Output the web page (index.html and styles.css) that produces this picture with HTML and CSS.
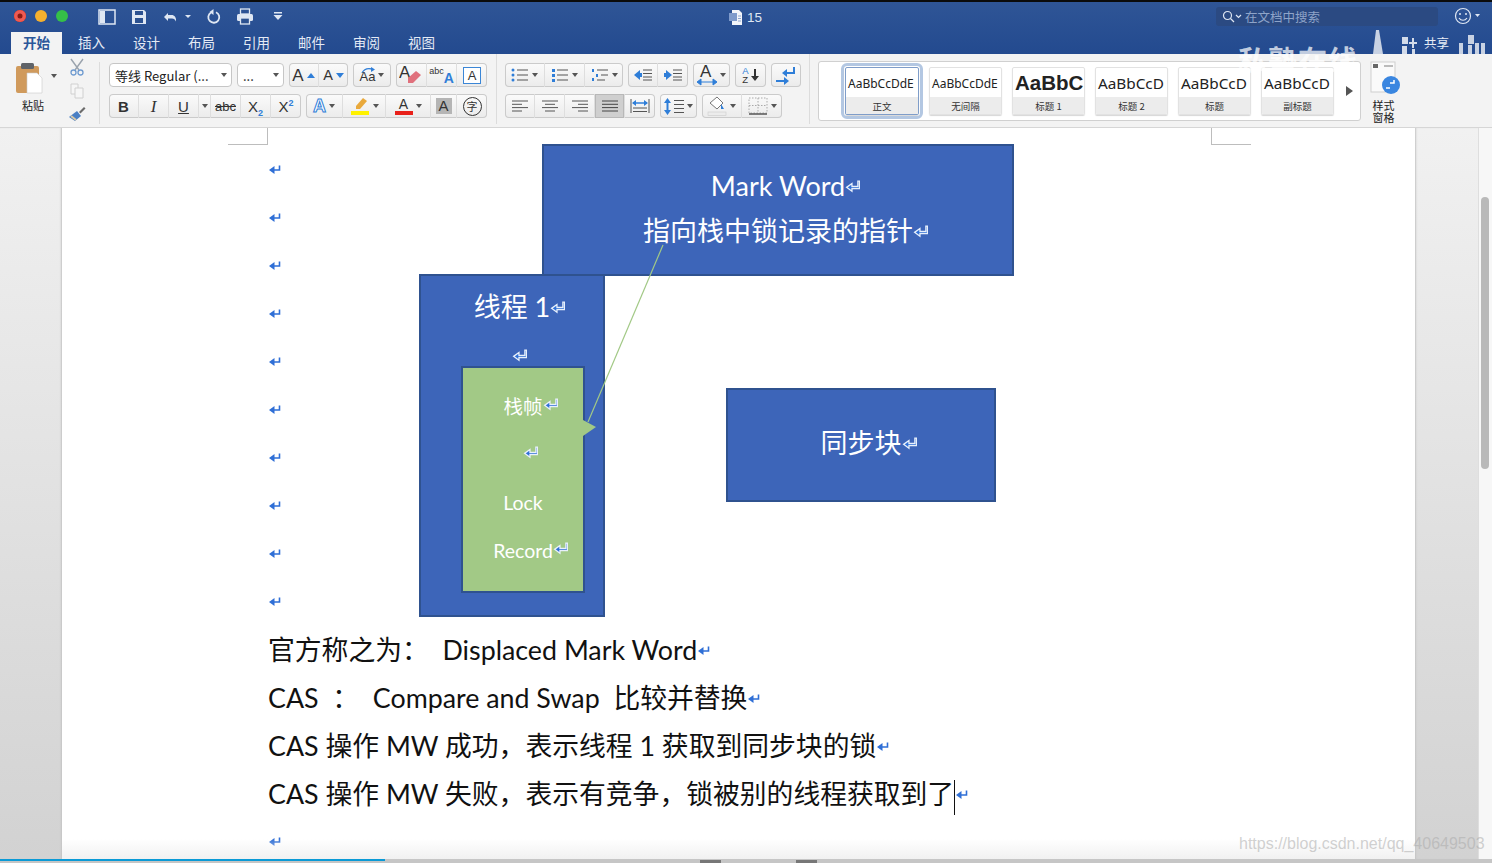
FILE: index.html
```html
<!DOCTYPE html>
<html>
    <head>
        <meta charset="utf-8">
        <title>15</title>
        <link rel="stylesheet" href="styles.css">
    </head>
    <body>
        <svg class="defs" width="0" height="0">
            <symbol id="enter" viewBox="0 0 12 10">
                <path d="M10.5 0.5v4.500H5" fill="none" stroke="currentColor" stroke-width="1.600"/>
                <path d="M0 5 L5.500 1 V9 Z" fill="currentColor"/>
            </symbol>
            <symbol id="enterLight" viewBox="0 0 14 12">
                <path d="M12 1v5H6.500V3.200L1.500 6.800l5 3.600V8H13.500V1z" fill="#2f6fd6" stroke="#e8f0fb" stroke-width="1.200"/>
            </symbol>
        </svg>

        <div id="app">
            <div class="topbar">
                <div class="titlerow">
                    <div class="lights">
                        <span class="light red"></span>
                        <span class="light yellow"></span>
                        <span class="light green"></span>
                    </div>
                    <div class="quick">
                        <svg class="q q1" width="18" height="16" viewBox="0 0 18 16"><rect x="1" y="1" width="16" height="14" fill="none" stroke="#dfe7f3" stroke-width="1.500"/><rect x="2" y="2" width="5" height="12" fill="#dfe7f3"/></svg>
                        <svg class="q q2" width="16" height="16" viewBox="0 0 16 16"><path d="M1 1h12l2 2v12H1z" fill="#dfe7f3"/><rect x="4" y="2" width="8" height="4" fill="#2c5190"/><rect x="4" y="9" width="8" height="5" fill="#2c5190"/></svg>
                        <svg class="q q3" width="28" height="14" viewBox="0 0 28 14"><path d="M5 3 1 7l4 4V8.500h4c2 0 3 1 4 3 .5-4-1.500-6.500-4.500-6.500H5z" fill="#dfe7f3"/><path d="M22 5h6l-3 3z" fill="#dfe7f3"/></svg>
                        <svg class="q q4" width="16" height="16" viewBox="0 0 16 16"><path d="M10 3.200a5.500 5.500 0 1 1-5 .3" fill="none" stroke="#dfe7f3" stroke-width="1.800"/><path d="M7.500 0v6l-4-3z" fill="#dfe7f3"/></svg>
                        <svg class="q q5" width="18" height="17" viewBox="0 0 18 17"><rect x="4.500" y="1" width="9" height="5" fill="none" stroke="#dfe7f3" stroke-width="1.300"/><rect x="1" y="6" width="16" height="7" rx="1.500" fill="#dfe7f3"/><rect x="4.500" y="10" width="9" height="6" fill="#2c5190" stroke="#dfe7f3" stroke-width="1.300"/></svg>
                        <svg class="q q6" width="10" height="9" viewBox="0 0 10 9"><rect x="1" y="0" width="8" height="1.500" fill="#dfe7f3"/><path d="M0.500 3h9L5 8z" fill="#dfe7f3"/></svg>
                    </div>
                    <div class="doctitle">
                        <svg width="13" height="15" viewBox="0 0 13 15"><path d="M3 0h7l3 3v12H3z" fill="#f2f5fa"/><rect x="0" y="3" width="8" height="8" fill="#7f9bcb"/><path d="M9 6h3M9 8.500h3M9 11h3" stroke="#8fa6cf"/></svg>
                        <span>15</span>
                    </div>
                    <div class="searchbox">
                        <svg width="20" height="13" viewBox="0 0 20 13"><circle cx="5.500" cy="5.500" r="4" fill="none" stroke="#dfe7f3" stroke-width="1.200"/><path d="M8.500 8.500 12 12" stroke="#dfe7f3" stroke-width="1.200"/><path d="M14 5l2.500 2.500L19 5" fill="none" stroke="#dfe7f3" stroke-width="1.200"/></svg>
                        <span>在文档中搜索</span>
                    </div>
                    <svg class="smile" width="27" height="18" viewBox="0 0 27 18"><circle cx="9" cy="9" r="7.500" fill="none" stroke="#dfe7f3" stroke-width="1.200"/><circle cx="6" cy="7" r="1" fill="#dfe7f3"/><circle cx="12" cy="7" r="1" fill="#dfe7f3"/><path d="M5 11c2 3 6 3 8 0" fill="none" stroke="#dfe7f3" stroke-width="1.200"/><path d="M21 7h5l-2.500 3z" fill="#dfe7f3"/></svg>
                </div>
                <div class="tabs">
                    <div class="tab active">开始</div>
                    <div class="tab">插入</div>
                    <div class="tab">设计</div>
                    <div class="tab">布局</div>
                    <div class="tab">引用</div>
                    <div class="tab">邮件</div>
                    <div class="tab">审阅</div>
                    <div class="tab">视图</div>
                </div>
            </div>

            <div class="ribbon">
                <div class="clipSec">
                    <div class="pasteBtn">
                        <svg width="44" height="32" viewBox="0 0 44 32"><rect x="1" y="4" width="23" height="27" rx="2" fill="#d09a5c"/><rect x="6" y="1" width="13" height="6" rx="1.500" fill="#5f6368"/><path d="M12 11h10l5 5v15H12z" fill="#fff" stroke="#c9c9c9" stroke-width=".6"/><path d="M36 12h6l-3 4z" fill="#555"/></svg>
                        <span>粘贴</span>
                    </div>
                    <div class="clipTools">
                        <svg width="16" height="18" viewBox="0 0 16 18"><path d="M2 1l8 11M14 1 6 12" stroke="#9aa3ad" stroke-width="1.400"/><circle cx="4.500" cy="14.500" r="2.500" fill="none" stroke="#6f9bd0" stroke-width="1.300"/><circle cx="11.500" cy="14.500" r="2.500" fill="none" stroke="#6f9bd0" stroke-width="1.300"/></svg>
                        <svg width="14" height="16" viewBox="0 0 14 16"><path d="M1 1h7v10H1z" fill="#f6f6f6" stroke="#d0d0d0"/><path d="M5 5h8v10H5z" fill="#f6f6f6" stroke="#d0d0d0"/></svg>
                        <svg width="18" height="16" viewBox="0 0 18 16"><path d="M1 11 9 5l4 5-6 5z" fill="#4a7fc4"/><path d="M3 10l5 4" stroke="#d8c9a8" stroke-width="2"/><path d="M11 6l5-5 1.500 1.500-5 5z" fill="#6b6b6b"/></svg>
                    </div>
                </div>

                <div class="fontSec">
                    <div class="row">
                        <div class="select wFont">
                            <span class="selectText">等线 Regular (...</span>
                            <span class="selectArrow"></span>
                        </div>
                        <div class="select wSize">
                            <span class="selectText">...</span>
                            <span class="selectArrow"></span>
                        </div>
                        <div class="group">
                            <div class="tb w30"><span class="ltr big">A</span><svg width="8" height="5" viewBox="0 0 8 5"><path d="M0 5h8L4 0z" fill="#2f7ed8"/></svg></div>
                            <div class="tb w29"><span class="ltr mid">A</span><svg width="8" height="5" viewBox="0 0 8 5"><path d="M0 0h8L4 5z" fill="#2f7ed8"/></svg></div>
                        </div>
                        <div class="group">
                            <div class="tb w38">
                                <span class="caseIcon">
                                    <svg class="swoop" width="14" height="6" viewBox="0 0 14 6"><path d="M1 6C3 2 7 1 11 2" fill="none" stroke="#2f7ed8" stroke-width="1.300"/><path d="M10 0l4 2.500L10 5z" fill="#2f7ed8"/></svg>
                                    <span class="ltr case">Aa</span>
                                </span>
                                <svg class="caret" width="6" height="4" viewBox="0 0 6 4"><path d="M0 0h6L3 4z"/></svg>
                            </div>
                        </div>
                        <div class="group">
                            <div class="tb w31">
                                <svg width="24" height="20" viewBox="0 0 24 20"><text x="0" y="13" class="svgText">A</text><path d="M9 13l8-7 5 4-8 8H9z" fill="#e0707c"/></svg>
                            </div>
                            <div class="tb w30 abcA"><span class="abcSmall">abc</span><span class="abcBig">A</span></div>
                            <div class="tb w30"><span class="boxedA">A</span></div>
                        </div>
                    </div>
                    <div class="row">
                        <div class="group">
                            <div class="tb w30"><b class="ltr sym">B</b></div>
                            <div class="tb w30"><i class="ltr serif">I</i></div>
                            <div class="tb w30"><u class="ltr sym">U</u></div>
                            <div class="tb w12"><svg class="caret" width="6" height="4" viewBox="0 0 6 4"><path d="M0 0h6L3 4z"/></svg></div>
                            <div class="tb w30"><s class="ltr abc">abc</s></div>
                            <div class="tb w30"><span class="ltr sym">X<sub class="scr">2</sub></span></div>
                            <div class="tb w30"><span class="ltr sym">X<sup class="scr">2</sup></span></div>
                        </div>
                        <div class="group">
                            <div class="tb w37"><span class="outlineA">A</span><svg class="caret" width="6" height="4" viewBox="0 0 6 4"><path d="M0 0h6L3 4z"/></svg></div>
                            <div class="tb w43">
                                <svg width="20" height="20" viewBox="0 0 20 20"><path d="M6 10l7-8 4 3-7 8H6z" fill="#e9a93c"/><rect x="1" y="15" width="18" height="4" fill="#fff200"/></svg>
                                <svg class="caret" width="6" height="4" viewBox="0 0 6 4"><path d="M0 0h6L3 4z"/></svg>
                            </div>
                            <div class="tb w45">
                                <span class="colorA">A</span>
                                <svg class="caret" width="6" height="4" viewBox="0 0 6 4"><path d="M0 0h6L3 4z"/></svg>
                            </div>
                            <div class="tb w26"><span class="shadeA">A</span></div>
                            <div class="tb w30"><span class="zi">字</span></div>
                        </div>
                    </div>
                </div>

                <div class="paraSec">
                    <div class="row">
                        <div class="group">
                            <div class="tb w40">
                                <svg width="18" height="14" viewBox="0 0 18 14"><g fill="#2f7ed8"><circle cx="2" cy="2" r="1.500"/><circle cx="2" cy="7" r="1.500"/><circle cx="2" cy="12" r="1.500"/></g><path d="M6 2h11M6 7h11M6 12h11" stroke="#555" stroke-width="1.200"/></svg>
                                <svg class="caret" width="6" height="4" viewBox="0 0 6 4"><path d="M0 0h6L3 4z"/></svg>
                            </div>
                            <div class="tb w40">
                                <svg width="18" height="14" viewBox="0 0 18 14"><path d="M1 1h3v3H1zM1 6h3v3H1zM1 11h3v3H1z" fill="#2f7ed8"/><path d="M6 2h11M6 7h11M6 12h11" stroke="#555" stroke-width="1.200"/></svg>
                                <svg class="caret" width="6" height="4" viewBox="0 0 6 4"><path d="M0 0h6L3 4z"/></svg>
                            </div>
                            <div class="tb w38">
                                <svg width="18" height="14" viewBox="0 0 18 14"><path d="M1 1h2v3H1zM5 6h2v3H5zM1 10h2v3H1z" fill="#2f7ed8"/><path d="M6 2h11M10 7h7M6 12h8" stroke="#555" stroke-width="1.200"/></svg>
                                <svg class="caret" width="6" height="4" viewBox="0 0 6 4"><path d="M0 0h6L3 4z"/></svg>
                            </div>
                        </div>
                        <div class="group">
                            <div class="tb w30"><svg width="18" height="12" viewBox="0 0 18 12"><path d="M0 6l6-5v10z" fill="#2f7ed8"/><rect x="5" y="4" width="3" height="4" fill="#2f7ed8"/><path d="M9 1h9M9 4.500h9M9 8h9M9 11h9" stroke="#555"/></svg></div>
                            <div class="tb w30"><svg width="18" height="12" viewBox="0 0 18 12"><path d="M8 6 2 1v10z" fill="#2f7ed8"/><rect x="0" y="4" width="3" height="4" fill="#2f7ed8"/><path d="M9 1h9M9 4.500h9M9 8h9M9 11h9" stroke="#555"/></svg></div>
                        </div>
                        <div class="group">
                            <div class="tb w37">
                                <svg width="20" height="22" viewBox="0 0 20 22"><text x="3" y="13" class="svgText">A</text><path d="M0 18l4-3v6zM20 18l-4-3v6zM4 18h12" fill="#2f7ed8" stroke="#2f7ed8"/></svg>
                                <svg class="caret" width="6" height="4" viewBox="0 0 6 4"><path d="M0 0h6L3 4z"/></svg>
                            </div>
                        </div>
                        <div class="group">
                            <div class="tb w31 sort"><span class="sortLetters"><span class="blue">A</span><span>Z</span></span><svg width="8" height="12" viewBox="0 0 8 12"><path d="M4 0v8" stroke="#333" stroke-width="2"/><path d="M0 7h8l-4 5z" fill="#333"/></svg></div>
                        </div>
                        <div class="group">
                            <div class="tb w30"><svg width="20" height="19" viewBox="0 0 20 19"><path d="M18 1v6H10" fill="none" stroke="#2f7ed8" stroke-width="2"/><path d="M11 3v8l-5-4z" fill="#2f7ed8"/><path d="M0 15h9" stroke="#2f7ed8" stroke-width="2"/><path d="M8 11v8l5-4z" fill="#2f7ed8"/></svg></div>
                        </div>
                    </div>
                    <div class="row">
                        <div class="group">
                            <div class="tb w30"><svg width="16" height="12" viewBox="0 0 16 12"><path d="M0 1h16M0 4.300h10M0 7.600h16M0 11h10" stroke="#555"/></svg></div>
                            <div class="tb w30"><svg width="16" height="12" viewBox="0 0 16 12"><path d="M0 1h16M3 4.300h10M0 7.600h16M3 11h10" stroke="#555"/></svg></div>
                            <div class="tb w30"><svg width="16" height="12" viewBox="0 0 16 12"><path d="M0 1h16M6 4.300h10M0 7.600h16M6 11h10" stroke="#555"/></svg></div>
                            <div class="tb w30 on"><svg width="16" height="12" viewBox="0 0 16 12"><path d="M0 1h16M0 4.300h16M0 7.600h16M0 11h16" stroke="#444"/></svg></div>
                            <div class="tb w30"><svg width="20" height="14" viewBox="0 0 20 14"><path d="M1 0v14M19 0v14" stroke="#555"/><path d="M3 4h14" stroke="#2f7ed8" stroke-width="1.500"/><path d="M2 4l4-3v6zM18 4l-4-3v6z" fill="#2f7ed8"/><path d="M3 9h14M3 12.500h14" stroke="#555"/></svg></div>
                        </div>
                        <div class="group">
                            <div class="tb w37">
                                <svg width="20" height="17" viewBox="0 0 20 17"><path d="M3.500 0 7 5H0zM3.500 17 0 12h7z" fill="#2f7ed8"/><rect x="2.500" y="4" width="2" height="9" fill="#2f7ed8"/><path d="M10 2.500h10M10 6.500h10M10 10.500h10M10 14.500h10" stroke="#555"/></svg>
                                <svg class="caret" width="6" height="4" viewBox="0 0 6 4"><path d="M0 0h6L3 4z"/></svg>
                            </div>
                        </div>
                        <div class="group">
                            <div class="tb w40">
                                <svg width="20" height="20" viewBox="0 0 20 20"><path d="M3 7l7-6 6 6-6 6z" fill="#fff" stroke="#777"/><path d="M14 8l3 5h-3z" fill="#2f7ed8"/><rect x="1" y="16" width="18" height="3.500" fill="#ececec" stroke="#ccc" stroke-width=".6"/></svg>
                                <svg class="caret" width="6" height="4" viewBox="0 0 6 4"><path d="M0 0h6L3 4z"/></svg>
                            </div>
                            <div class="tb w40">
                                <svg width="20" height="18" viewBox="0 0 20 18"><path d="M1 1h18v15H1zM10 1v15M1 8.500h18" fill="none" stroke="#aaa" stroke-dasharray="1.500 1.500"/><path d="M1 17h18" stroke="#555" stroke-width="1.500"/></svg>
                                <svg class="caret" width="6" height="4" viewBox="0 0 6 4"><path d="M0 0h6L3 4z"/></svg>
                            </div>
                        </div>
                    </div>
                </div>

                <div class="styleSec">
                    <div class="gallery">
                        <div class="tile picked"><div class="sample">AaBbCcDdE</div><div class="tileName">正文</div></div>
                        <div class="tile"><div class="sample">AaBbCcDdE</div><div class="tileName">无间隔</div></div>
                        <div class="tile"><div class="sample heavy">AaBbC</div><div class="tileName">标题 1</div></div>
                        <div class="tile"><div class="sample large">AaBbCcD</div><div class="tileName">标题 2</div></div>
                        <div class="tile"><div class="sample large">AaBbCcD</div><div class="tileName">标题</div></div>
                        <div class="tile"><div class="sample large">AaBbCcD</div><div class="tileName">副标题</div></div>
                        <svg class="galleryArrow" width="7" height="10" viewBox="0 0 7 10"><path d="M0 0l7 5-7 5z" fill="#555"/></svg>
                    </div>
                    <div class="paneBtn">
                        <svg width="32" height="36" viewBox="0 0 32 36"><rect x="1" y="1" width="24" height="30" fill="#fafafa" stroke="#cfcfcf"/><rect x="3" y="3" width="5" height="4" fill="#666"/><path d="M14 5h9" stroke="#bbb" stroke-width="2"/><circle cx="21" cy="24" r="9" fill="#3a86e0"/><path d="M24 19v3h-4M20 27h-4" fill="none" stroke="#fff" stroke-width="1.500"/></svg>
                        <span>样式<br>窗格</span>
                    </div>
                </div>
            </div>

            <div class="workspace">
                <div class="gutter"></div>
                <div class="page">
                    <div class="crop cropLeft"></div>
                    <div class="crop cropRight"></div>

                    <div class="docText">
                        <p class="line empty"><svg class="mark"><use href="#enter"/></svg></p>
                        <p class="line empty"><svg class="mark"><use href="#enter"/></svg></p>
                        <p class="line empty"><svg class="mark"><use href="#enter"/></svg></p>
                        <p class="line empty"><svg class="mark"><use href="#enter"/></svg></p>
                        <p class="line empty"><svg class="mark"><use href="#enter"/></svg></p>
                        <p class="line empty"><svg class="mark"><use href="#enter"/></svg></p>
                        <p class="line empty"><svg class="mark"><use href="#enter"/></svg></p>
                        <p class="line empty"><svg class="mark"><use href="#enter"/></svg></p>
                        <p class="line empty"><svg class="mark"><use href="#enter"/></svg></p>
                        <p class="line empty"><svg class="mark"><use href="#enter"/></svg></p>
                        <p class="line">官方称之为： &nbsp;Displaced Mark Word<svg class="mark"><use href="#enter"/></svg></p>
                        <p class="line">CAS &nbsp;： &nbsp;Compare and Swap &nbsp;比较并替换<svg class="mark"><use href="#enter"/></svg></p>
                        <p class="line">CAS 操作 MW 成功，表示线程 1 获取到同步块的锁<svg class="mark"><use href="#enter"/></svg></p>
                        <p class="line">CAS 操作 MW 失败，表示有竞争，锁被别的线程获取到了<span class="cursor"></span><svg class="mark"><use href="#enter"/></svg></p>
                        <p class="line empty"><svg class="mark"><use href="#enter"/></svg></p>
                    </div>

                    <div class="shape threadBox">
                        <p class="shapeLine">线程 1<svg class="lightMark"><use href="#enterLight"/></svg></p>
                        <p class="shapeLine"><svg class="lightMark"><use href="#enterLight"/></svg></p>
                    </div>
                    <div class="shape frameBox">
                        <p class="frameLine">栈帧<svg class="lightMark"><use href="#enterLight"/></svg></p>
                        <p class="frameLine"><svg class="lightMark"><use href="#enterLight"/></svg></p>
                        <p class="frameLine">Lock</p>
                        <p class="frameLine">Record<svg class="lightMark"><use href="#enterLight"/></svg></p>
                    </div>
                    <div class="shape markBox">
                        <p class="markLine">Mark Word<svg class="lightMark"><use href="#enterLight"/></svg></p>
                        <p class="markLine">指向栈中锁记录的指针<svg class="lightMark"><use href="#enterLight"/></svg></p>
                    </div>
                    <div class="shape syncBox">
                        <p class="shapeLine">同步块<svg class="lightMark"><use href="#enterLight"/></svg></p>
                    </div>
                    <svg class="pointer" viewBox="0 0 1353 731">
                        <path d="M601 117 L526 294" stroke="#a2c986" stroke-width="1.200" fill="none"/>
                        <path d="M521 292 L534 299 L521 308 Z" fill="#a2c986"/>
                    </svg>
                    <div class="pageFade"></div>
                </div>
                <div class="gutter right"></div>
                <div class="scrollTrack"><div class="scrollThumb"></div></div>
            </div>

            <div class="status">
                <div class="progress"></div>
                <div class="statusBits">
                    <span class="bit"></span>
                    <span class="bit"></span>
                </div>
            </div>

            <div class="wmName">私塾在线</div>
            <svg class="wmBars" width="130" height="30" viewBox="0 0 130 30">
                <path d="M5 0h3l4 24H2z" fill="#fff" opacity=".75"/>
                <path d="M31 7h6v7h-6zM31 16h5v8h-5zM38 12h8v2h-8zM41 8h2v10h-2zM41 19h3v5h-3z" fill="#fff" opacity=".8"/>
                <path d="M97 5h6v9h-6zM88 13h4v11h-4zM97 15h4v9h-4zM104 13h4v11h-4zM110 13h4v11h-4z" fill="#fff" opacity=".75"/>
            </svg>
            <div class="wmShare">共享</div>
            <div class="csdn">https://blog.csdn.net/qq_40649503</div>
        </div>
    </body>
</html>
```
FILE: styles.css
```css
body {
    margin: 0;
    font-family: "Noto Sans CJK SC", "Liberation Sans", sans-serif;
    background: #000;
}
p { margin: 0; }

.defs { display: none; }

#app {
    position: relative;
    width: 1492px;
    height: 863px;
    overflow: hidden;
    display: flex;
    flex-direction: column;
    background: #f3f3f3;
}

/* title bar */
.topbar {
    height: 52px;
    border-top: 2px solid #0b0b0b;
    background: linear-gradient(#2f5596, #234a8f);
    flex: none;
}
.titlerow {
    height: 28px;
    display: flex;
    align-items: center;
    position: relative;
}
.lights {
    display: flex;
    gap: 9px;
    margin-left: 14px;
    width: 79px;
}
.light {
    width: 12px;
    height: 12px;
    border-radius: 50%;
}
.red { background: #ee5a52; box-shadow: inset 0 0 0 3.500px #ee5a52, inset 0 0 0 6px #8a1a14; }
.yellow { background: #f5b02e; }
.green { background: #35c048; }

.quick {
    display: flex;
    align-items: center;
    margin-top: 1px;
}
.q { display: block; flex: none; }
.q1 { margin-left: 5px; }
.q2 { margin-left: 15px; }
.q3 { margin-left: 16px; }
.q4 { margin-left: 15px; }
.q5 { margin-left: 14px; }
.q6 { margin-left: 19px; }

.doctitle {
    position: absolute;
    left: 729px;
    top: 8px;
    display: flex;
    align-items: center;
    gap: 5px;
    color: #dfe7f3;
    font: 13.500px "Liberation Sans", sans-serif;
}
.searchbox {
    position: absolute;
    left: 1216px;
    top: 5px;
    width: 222px;
    height: 19px;
    background: #2b4a82;
    border-radius: 3px;
    display: flex;
    align-items: center;
    gap: 3px;
    padding-left: 6px;
    box-sizing: border-box;
    color: #8ea4c9;
    font-size: 12.500px;
}
.smile {
    position: absolute;
    left: 1454px;
    top: 5px;
}

.tabs {
    height: 24px;
    display: flex;
    padding-left: 11px;
}
.tab {
    width: 55px;
    height: 22px;
    margin-top: 2px;
    text-align: center;
    color: #e4eaf5;
    font-size: 13.500px;
    line-height: 21px;
}
.tab.active {
    width: 51px;
    margin-right: 2px;
    background: #f3f3f3;
    color: #2b579a;
    font-weight: 700;
}

/* ribbon */
.ribbon {
    height: 73px;
    flex: none;
    display: flex;
    background: #f3f3f3;
    border-bottom: 1px solid #d6d6d6;
}
.clipSec {
    width: 100px;
    box-sizing: border-box;
    border-right: 1px solid #dcdcdc;
    margin: 8px 0 3px;
    display: flex;
}
.pasteBtn {
    margin-left: 15px;
    width: 44px;
    display: flex;
    flex-direction: column;
    font-size: 11px;
    color: #222;
}
.pasteBtn span {
    margin: 3px 0 0 7px;
}
.clipTools {
    margin: -4px 0 0 9px;
    display: flex;
    flex-direction: column;
    align-items: center;
    gap: 7px;
}
.fontSec {
    width: 397px;
    box-sizing: border-box;
    padding: 9px 0 0 9px;
    margin-bottom: 3px;
    border-right: 1px solid #dcdcdc;
}
.paraSec {
    width: 313px;
    box-sizing: border-box;
    padding: 9px 0 0 8px;
    margin-bottom: 3px;
    border-right: 1px solid #dcdcdc;
}
.row {
    display: flex;
    gap: 5px;
    height: 24px;
    margin-bottom: 7px;
}
.select {
    height: 24px;
    box-sizing: border-box;
    background: #fff;
    border: 1px solid #c6c6c6;
    border-radius: 4px;
    display: flex;
    align-items: center;
    font: 13px "Noto Sans CJK SC", sans-serif;
    color: #222;
    position: relative;
}
.wFont { width: 123px; }
.wSize { width: 47px; }
.selectText { padding-left: 5px; white-space: nowrap; }
.selectArrow {
    position: absolute;
    right: 4px;
    top: 9px;
    border-left: 3px solid transparent;
    border-right: 3px solid transparent;
    border-top: 4px solid #555;
}
.group {
    display: flex;
    height: 24px;
    border-radius: 4px;
    background: linear-gradient(#fbfbfb, #ebebeb);
    box-shadow: inset 0 0 0 1px #cbcbcb;
}
.tb {
    height: 24px;
    box-sizing: border-box;
    display: flex;
    align-items: center;
    justify-content: center;
    gap: 3px;
    color: #333;
    border-right: 1px solid #dedede;
}
.tb:last-child { border-right: 0; }
.tb.on { background: #cfcfcf; box-shadow: inset 0 0 0 1px #b8b8b8; }
.w12 { width: 12px; }
.w26 { width: 26px; }
.w29 { width: 29px; }
.w30 { width: 30px; }
.w31 { width: 31px; }
.w37 { width: 37px; }
.w38 { width: 38px; }
.w40 { width: 40px; }
.w43 { width: 43px; }
.w45 { width: 45px; }

.caret { fill: #555; flex: none; }
.ltr { font-family: "Liberation Sans", sans-serif; line-height: 1; }
.big { font-size: 17px; }
.mid { font-size: 14.500px; }
.caseIcon {
    display: flex;
    flex-direction: column;
    align-items: center;
}
.swoop { margin-bottom: -3px; }
.case { font-size: 13px; }
.sym { font-size: 15px; }
.serif { font-family: "Liberation Serif", serif; font-size: 17px; }
.abc { font-size: 13px; }
.scr { font-size: 9px; color: #2f7ed8; font-weight: 700; line-height: 0; }
.svgText { font: 17px "Liberation Sans", sans-serif; fill: #333; }
.abcA { position: relative; }
.abcSmall { font: 9px "Liberation Sans", sans-serif; margin: -9px -3px 0 0; }
.abcBig { font: 700 14px "Liberation Sans", sans-serif; color: #2f7ed8; margin-top: 5px; }
.boxedA {
    width: 16px;
    height: 15px;
    border: 1px solid #3b86d6;
    text-align: center;
    font: 13px/15px "Liberation Sans", sans-serif;
    background: #fff;
}
.outlineA {
    font: 700 18px "Liberation Sans", sans-serif;
    color: #fff;
    -webkit-text-stroke: 1px #2f7ed8;
}
.colorA {
    font: 14px/14px "Liberation Sans", sans-serif;
    width: 18px;
    text-align: center;
    border-bottom: 4px solid #e8201a;
}
.shadeA {
    width: 16px;
    height: 16px;
    background: #b5b5b5;
    text-align: center;
    font: 15px/16px "Liberation Sans", sans-serif;
}
.zi {
    width: 17px;
    height: 17px;
    border: 1px solid #333;
    border-radius: 50%;
    text-align: center;
    font-size: 11px;
    line-height: 16px;
}
.sort { gap: 2px; }
.sortLetters {
    display: flex;
    flex-direction: column;
    font: 9.500px/9.500px "Liberation Sans", sans-serif;
}
.blue { color: #2f7ed8; }

/* styles gallery */
.styleSec {
    flex: 1;
    display: flex;
    padding: 7px 0 0 8px;
}
.gallery {
    width: 543px;
    height: 60px;
    box-sizing: border-box;
    background: #fff;
    border: 1px solid #d0d0d0;
    border-radius: 3px;
    display: flex;
    align-items: flex-start;
    padding: 5px 0 0 26px;
    gap: 10px;
    position: relative;
}
.tile {
    width: 73px;
    height: 48px;
    box-sizing: border-box;
    border: 1px solid #e2e2e2;
    border-radius: 2px;
    display: flex;
    flex-direction: column;
    overflow: hidden;
    box-shadow: 0 1px 1px #d6d6d6;
    color: #222;
}
.tile.picked {
    width: 74px;
    outline: 3px solid #b3c7e2;
    outline-offset: 1px;
    border-color: #7f9dc9;
}
.sample {
    flex: 1;
    font: 12px/31px "Noto Sans", sans-serif;
    white-space: nowrap;
    overflow: hidden;
    padding-left: 2px;
}
.sample.heavy {
    font: 700 20.500px/30px "Liberation Sans", sans-serif;
}
.sample.large {
    font: 15.300px/30px "Noto Sans", sans-serif;
}
.tileName {
    height: 17px;
    flex: none;
    background: #ececec;
    text-align: center;
    font-size: 9.500px;
    line-height: 18px;
    color: #333;
}
.galleryArrow {
    position: absolute;
    right: 7px;
    top: 24px;
}
.paneBtn {
    margin-left: 9px;
    display: flex;
    flex-direction: column;
    font-size: 11px;
    line-height: 12px;
    color: #222;
}
.paneBtn span {
    text-align: center;
    width: 27px;
    margin-top: 2px;
}

/* document area */
.workspace {
    flex: 1;
    display: flex;
    min-height: 0;
}
.gutter {
    width: 62px;
    flex: none;
    background: linear-gradient(#f1f1f1, #d2d2d2);
    box-shadow: inset -2px 0 2px -1px #c4c4c4;
}
.gutter.right {
    width: 63px;
    box-shadow: inset 2px 0 2px -1px #c4c4c4;
}
.scrollTrack {
    width: 14px;
    flex: none;
    background: #f7f7f7;
    border-left: 1px solid #dedede;
    box-sizing: border-box;
    padding: 69px 3px 0 2px;
}
.scrollThumb {
    height: 272px;
    border-radius: 4px;
    background: #b9b9b9;
}
.page {
    width: 1353px;
    flex: none;
    position: relative;
    background: #fff;
    overflow: hidden;
}
.crop {
    position: absolute;
    top: 0;
    height: 16px;
    width: 39px;
    border-bottom: 1px solid #bdbdbd;
}
.cropLeft {
    left: 166px;
    border-right: 1px solid #bdbdbd;
}
.cropRight {
    left: 1149px;
    border-left: 1px solid #bdbdbd;
}
.docText {
    padding: 18px 0 0 206px;
    font-family: "Lato", "Noto Sans CJK SC", sans-serif;
    font-size: 26.800px;
    color: #111;
}
.line {
    height: 48px;
    line-height: 48px;
    white-space: nowrap;
}
.mark {
    width: 12px;
    height: 10px;
    color: #2f6fd6;
    margin-left: 1px;
    vertical-align: 4px;
}
.empty .mark { vertical-align: 5px; }
.cursor {
    display: inline-block;
    width: 1px;
    height: 35px;
    background: #111;
    vertical-align: -11px;
}

.shape {
    position: absolute;
    box-sizing: border-box;
    border: 2px solid #2f528f;
    background: #3d65b9;
    color: #fff;
    text-align: center;
    font-family: "Lato", "Noto Sans CJK SC", sans-serif;
    font-size: 27px;
}
.markBox {
    left: 480px;
    top: 16px;
    width: 472px;
    height: 132px;
    padding-top: 17px;
}
.threadBox {
    left: 357px;
    top: 146px;
    width: 186px;
    height: 343px;
    padding-top: 7px;
}
.frameBox {
    left: 399px;
    top: 238px;
    width: 124px;
    height: 227px;
    padding-top: 15px;
    background: #a2c986;
    font-size: 19.500px;
}
.syncBox {
    left: 664px;
    top: 260px;
    width: 270px;
    height: 114px;
    padding-top: 29px;
}
.shapeLine {
    line-height: 48px;
    height: 48px;
}
.markLine {
    line-height: 45px;
    height: 45px;
}
.frameLine {
    line-height: 48px;
    height: 48px;
}
.lightMark {
    width: 15px;
    height: 13px;
    margin-right: -15px;
    vertical-align: 3px;
}
.pointer {
    position: absolute;
    left: 0;
    top: 0;
    width: 1353px;
    height: 731px;
}
.pageFade {
    position: absolute;
    left: 0;
    right: 0;
    bottom: 0;
    height: 20px;
    background: linear-gradient(rgba(243, 243, 243, 0), #f1f1f1);
}

/* bottom strip */
.status {
    height: 4px;
    flex: none;
    background: #c6c6c6;
    position: relative;
    overflow: hidden;
}
.progress {
    position: absolute;
    left: 0;
    top: 0;
    width: 385px;
    height: 2px;
    background: #0a9ad6;
}
.statusBits {
    display: flex;
    gap: 75px;
    padding: 1px 0 0 700px;
}
.bit {
    width: 21px;
    height: 3px;
    background: #777;
}

/* video watermarks laid over the window */
.wmName {
    position: absolute;
    left: 1238px;
    top: 38px;
    font-size: 29px;
    font-weight: 700;
    letter-spacing: 1px;
    color: rgba(255, 255, 255, 0.72);
    white-space: nowrap;
}
.wmShare {
    position: absolute;
    left: 1424px;
    top: 33px;
    font-size: 12.500px;
    color: #e7ecf5;
}
.wmBars {
    position: absolute;
    left: 1371px;
    top: 30px;
}
.csdn {
    position: absolute;
    left: 1239px;
    top: 835px;
    font: 16px "Liberation Sans", sans-serif;
    color: rgba(170, 170, 170, 0.55);
    white-space: nowrap;
}
```
